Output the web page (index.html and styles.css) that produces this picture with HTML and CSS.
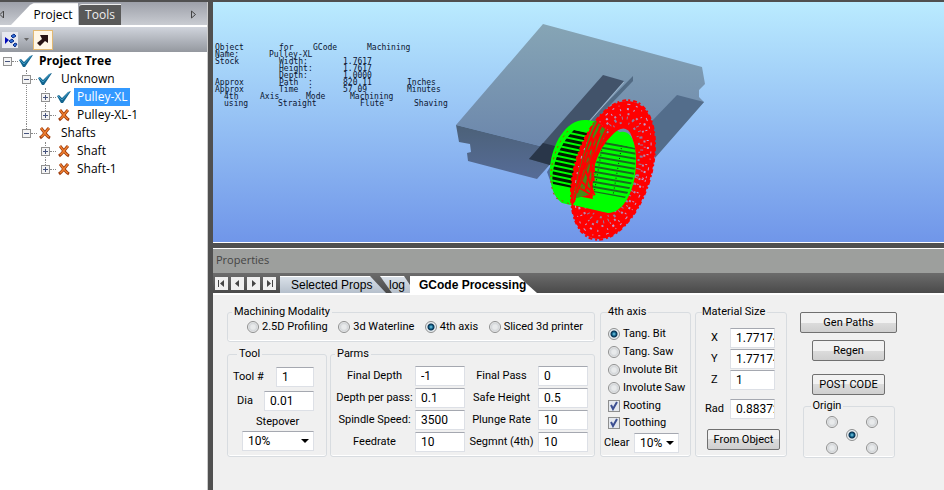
FILE: index.html
```
<!DOCTYPE html>
<html lang="en">
<head>
<meta charset="utf-8">
<title>GCode Processing</title>
<link rel="stylesheet" href="styles.css">
</head>
<body>

<svg class="defs" width="0" height="0" aria-hidden="true">
	<symbol id="check" viewBox="0 0 16 14"><path d="M1 6l2-1 3 3 6-6 3-1-8 12H5z" fill="#14658f"/><path d="M2 6l4 4 7-8" fill="none" stroke="#3e9cc6"/></symbol>
	<symbol id="cross" viewBox="0 0 16 14"><path d="M4 2c2 2 5 8 9 10M12 2c-3 3-5 7-9 10" fill="none" stroke="#9c3a0c" stroke-width="3"/><path d="M4 2c2 2 5 8 8 9M12 2c-3 3-5 7-8 9" fill="none" stroke="#f08030" stroke-width="1.500"/></symbol>
</svg>

<aside class="sidebar">
	<div class="sidetabs">
		<button class="scroll" aria-label="Previous tab"><svg width="6" height="9"><path d="M0 4.500L3.500 1v7z" fill="none" stroke="#444"/></svg></button>
		<button class="tab active">Project</button>
		<button class="tab">Tools</button>
		<button class="scroll next" aria-label="Next tab"><svg width="6" height="9"><path d="M.5 1v7l4-3.500z" fill="none" stroke="#444"/></svg></button>
	</div>
	<div class="toolbar">
		<button class="nodes" aria-label="Tree options"><svg width="16" height="16"><path d="M3 5l4 3-4 4z" fill="#0008b8"/><path d="M9 4l3-2 2 2-3 2zM7 9l3-2 2 2-3 2zM11 13l2-2 2 1-2 3z" fill="#2d6ed8" stroke="#102f88"/></svg></button>
		<svg class="drop" width="5" height="3"><path d="M0 0h5L2.500 3z" fill="#666"/></svg>
		<button class="pick" aria-label="Pick"><svg width="14" height="14"><path d="M4 2h8v8L9 8l-5 5-3-3 5-4z" fill="#291313"/></svg></button>
	</div>
	<ul class="tree">
		<li>
			<div class="node root"><i class="box"></i><svg><use href="#check"/></svg><b>Project Tree</b></div>
			<ul>
				<li>
					<div class="node branch"><i class="box"></i><svg><use href="#check"/></svg><span>Unknown</span></div>
					<ul>
						<li><div class="node"><i class="box plus"></i><svg><use href="#check"/></svg><span class="selected">Pulley-XL</span></div></li>
						<li><div class="node"><i class="box plus"></i><svg><use href="#cross"/></svg><span>Pulley-XL-1</span></div></li>
					</ul>
				</li>
				<li>
					<div class="node branch"><i class="box"></i><svg><use href="#cross"/></svg><span>Shafts</span></div>
					<ul>
						<li><div class="node"><i class="box plus"></i><svg><use href="#cross"/></svg><span>Shaft</span></div></li>
						<li><div class="node"><i class="box plus"></i><svg><use href="#cross"/></svg><span>Shaft-1</span></div></li>
					</ul>
				</li>
			</ul>
		</li>
	</ul>
</aside>

<main>
	<section class="viewport">
		<svg class="scene" viewBox="0 0 731 240" preserveAspectRatio="xMinYMin slice">
			<defs>
				<linearGradient id="top" x1="0" y1="0" x2="0" y2="1"><stop offset="0" stop-color="#86a5b5"/><stop offset="1" stop-color="#6680aa"/></linearGradient>
				<linearGradient id="front" x1="0" y1="0" x2="0" y2="1"><stop offset="0" stop-color="#4c6178"/><stop offset="1" stop-color="#566c98"/></linearGradient>
				<pattern id="teeth" width="30" height="5" patternUnits="userSpaceOnUse" patternTransform="rotate(12)"><path d="M0 0h30v3H0z" fill="#001c00"/></pattern>
				<pattern id="bores" width="40" height="5" patternUnits="userSpaceOnUse" patternTransform="rotate(10)"><path d="M0 0h40v2H0z" fill="#176b20"/><path d="M8 3h1v1H8zM27 3h1v1h-1z" fill="#030"/></pattern>
			</defs>
			<path d="M330 22L489 65l3 17-6 6v7l5 5-49 55-60 15-55-26-84-21z" fill="url(#top)"/>
			<path d="M243 123l84 21 22 5-25 28-69-18-1-8 4-1-1-8-11-2z" fill="url(#front)"/>
			<path d="M464 93l27 7-49 56-4-36z" fill="#536d8b"/>
			<path d="M390 73l21 6-74 84-21-6z" fill="#42536a"/>
			<path d="M316 157l14-16 20 5-13 17z" fill="#293649"/>
			<path d="M420 74v5l-41 43-5-1z" fill="#526b84"/>
			<path d="M411 80l-36 41" stroke="#9fb5ca" fill="none"/>
			<path d="M334 170l6-10 5 12-7 9z" fill="#526ba0"/>
			<!-- hub, back end -->
			<path d="M374 118c-20-2-35 23-37 47-1 20 5 31 12 36l46 11 14-80-15-11z" fill="#0f0"/>
			<path d="M361 128l31 7-13 55-39-8c-3-12 5-39 21-54z" fill="url(#teeth)"/>
			<path d="M355 129c-15 16-23 50-12 67l16 7" fill="none" stroke="#b34a00" stroke-width="1" stroke-dasharray="2 4"/>
			<!-- flange -->
			<g transform="translate(400 168) rotate(17)" fill="none" stroke="red">
				<ellipse rx="29" ry="62" stroke-width="18"/>
				<ellipse rx="24" ry="49" stroke-width="12"/>
				<ellipse rx="38" ry="72" stroke-width="2" stroke-dasharray="4 2 2 3"/>
				<g stroke="#c09fd0">
					<ellipse rx="34" ry="68" stroke-dasharray="2 5 1 8 3 6"/>
					<ellipse rx="31" ry="63" stroke-width="2" stroke-dasharray="1 6 2 5 1 9"/>
					<ellipse rx="28" ry="58" stroke="#b28fb5" stroke-width="2" stroke-dasharray="2 4 1 7 2 8"/>
					<ellipse rx="25" ry="54" stroke="#927ba0" stroke-width="3" stroke-dasharray="1 5 2 6 1 4"/>
					<ellipse rx="23" ry="49" stroke="#927ba0" stroke-width="2" stroke-dasharray="1 6 2 7"/>
				</g>
			</g>
			<!-- hub, front end -->
			<path d="M408 130c11-2 16 14 15 32-1 28-13 49-28 49l-35-8 4-9 16 3 1-30c4-18 15-36 27-37z" fill="#0f0"/>
			<path d="M392 139l30 7c2 19-2 36-10 50l-32-6 1-24z" fill="url(#bores)"/>
			<path d="M382 118c-9 22-18 54-22 79l19-5 3-37 12-26z" fill="#448c16"/>
			<path d="M386 118c-12 23-20 52-25 82M390 121c-13 22-22 49-26 70M395 124c-9 18-16 30-17 71M365 188l22-57M366 177l16 16M370 161l11 31M375 148l6 31M379 135l2 35M362 183l18 11M387 124l-15 66M369 168l23-28" fill="none" stroke="red" stroke-width="2"/>
			<path d="M362 192l18-42M368 187l15-16" fill="none" stroke="#a44505"/>
		</svg>
		<div class="hud">
			<p class="title"><span>Object</span> <span>for</span> <span>GCode</span> <span>Machining</span></p>
			<p class="name"><span>Name:</span> <span>Pulley-XL</span></p>
			<p><span>Stock</span> <span>Width:</span> <span>1.7617</span></p>
			<p><span></span> <span>Height:</span> <span>1.7617</span></p>
			<p><span></span> <span>Depth:</span> <span>1.0000</span></p>
			<p><span>Approx</span> <span>Path &nbsp;:</span> <span>820.11</span> <span>Inches</span></p>
			<p><span>Approx</span> <span>Time &nbsp;:</span> <span>57.09</span> <span>Minutes</span></p>
			<p class="mode"><span>4th</span> <span>Axis</span> <span>Mode</span> <span>Machining</span></p>
			<p class="method"><span>using</span> <span>Straight</span> <span>Flute</span> <span>Shaving</span></p>
		</div>
	</section>

	<section class="properties">
		<h2>Properties</h2>
		<div class="tabs">
			<button class="nav" aria-label="First"><svg width="9" height="9"><path d="M1 1h1v7H1zM7 1v7L3 4.500z"/></svg></button>
			<button class="nav" aria-label="Previous"><svg width="9" height="9"><path d="M6 1v7L2 4.500z"/></svg></button>
			<button class="nav" aria-label="Next"><svg width="9" height="9"><path d="M3 1v7l4-3.500z"/></svg></button>
			<button class="nav" aria-label="Last"><svg width="9" height="9"><path d="M2 1v7l4-3.500zM7 1h1v7H7z"/></svg></button>
			<button class="tab selprops">Selected Props</button>
			<button class="tab log">log</button>
			<button class="tab active">GCode Processing</button>
		</div>
		<form class="panel">
			<div class="left">
				<fieldset class="modality">
					<legend>Machining Modality</legend>
					<div class="choices">
						<label><input type="radio" name="modality">2.5D Profiling</label>
						<label><input type="radio" name="modality">3d Waterline</label>
						<label><input type="radio" name="modality" checked>4th axis</label>
						<label><input type="radio" name="modality">Sliced 3d printer</label>
					</div>
				</fieldset>
				<fieldset class="tool">
					<legend>Tool</legend>
					<div class="row"><label for="toolno">Tool #</label><input type="text" id="toolno" value="1"></div>
					<div class="row dia"><label for="dia">Dia</label><input type="text" id="dia" value="0.01"></div>
					<label for="stepover" class="stepover">Stepover</label>
					<select id="stepover"><option>10%</option></select>
				</fieldset>
				<fieldset class="parms">
					<legend>Parms</legend>
					<div class="grid">
						<label for="depth">Final Depth</label><input type="text" id="depth" value="-1">
						<label for="pass">Final Pass</label><input type="text" id="pass" value="0">
						<label for="perpass">Depth per pass:</label><input type="text" id="perpass" value="0.1">
						<label for="safe">Safe Height</label><input type="text" id="safe" value="0.5">
						<label for="speed">Spindle Speed:</label><input type="text" id="speed" value="3500">
						<label for="plunge">Plunge Rate</label><input type="text" id="plunge" value="10">
						<label for="feed">Feedrate</label><input type="text" id="feed" value="10">
						<label for="segmnt">Segmnt (4th)</label><input type="text" id="segmnt" value="10">
					</div>
				</fieldset>
			</div>
			<fieldset class="axis">
				<legend>4th axis</legend>
				<label><input type="radio" name="axis" checked>Tang. Bit</label>
				<label><input type="radio" name="axis">Tang. Saw</label>
				<label><input type="radio" name="axis">Involute Bit</label>
				<label><input type="radio" name="axis">Involute Saw</label>
				<label class="tick"><input type="checkbox" checked>Rooting</label>
				<label class="tick"><input type="checkbox" checked>Toothing</label>
				<div class="row"><label for="clear">Clear</label><select id="clear"><option>10%</option></select></div>
			</fieldset>
			<fieldset class="material">
				<legend>Material Size</legend>
				<div class="row"><label for="mx">X</label><input type="text" id="mx" value="1.77174"></div>
				<div class="row"><label for="my">Y</label><input type="text" id="my" value="1.77174"></div>
				<div class="row"><label for="mz">Z</label><input type="text" id="mz" value="1"></div>
				<div class="row rad"><label for="rad">Rad</label><input type="text" id="rad" value="0.88372"></div>
				<button type="button" class="btn">From Object</button>
			</fieldset>
			<div class="actions">
				<button type="button" class="btn wide">Gen Paths</button>
				<button type="button" class="btn">Regen</button>
				<button type="button" class="btn post">POST CODE</button>
				<fieldset class="origin">
					<legend>Origin</legend>
					<input type="radio" name="origin" aria-label="Top left">
					<input type="radio" name="origin" aria-label="Top right">
					<input type="radio" name="origin" aria-label="Center" class="center" checked>
					<input type="radio" name="origin" aria-label="Bottom left">
					<input type="radio" name="origin" aria-label="Bottom right">
				</fieldset>
			</div>
		</form>
	</section>
</main>

</body>
</html>
```
FILE: styles.css
```
* {box-sizing: border-box;}
body {
	display: flex;
	margin: 0;
	min-height: 100vh;
	padding-top: 2px;
	background: #505050;
	color: #000;
	font: 11px/14px Roboto, sans-serif;
	overflow: hidden;
}
button, input, select {
	font: inherit;
	color: inherit;
	margin: 0;
}
.defs {position: absolute;}

/* ---- left pane ---- */

.sidebar {
	flex: none;
	width: 208px;
	margin-right: 5px;
	background: #fff;
	font: 12px/18px "Open Sans", sans-serif;
	border-right: 1px solid #ccc;
}
.sidetabs {
	display: flex;
	align-items: flex-end;
	height: 23px;
	background: linear-gradient(#9da0a9, #c9ccd2);
}
.sidetabs button {
	border: 0;
	padding: 0;
	background: none;
}
.sidetabs .scroll {
	width: 11px;
	height: 20px;
	text-align: left;
}
.sidetabs .next {margin: 0 5px 0 auto;}
.sidetabs .tab {
	width: 42px;
	height: 21px;
	background: #595959;
	color: #eee;
	border-top: 1px solid #eee;
	border-radius: 3px 0 0 0;
}
.sidetabs .tab.active {
	width: 67px;
	height: 22px;
	padding-left: 17px;
	margin-right: 1px;
	background: #fff;
	color: #000;
	clip-path: polygon(0 100%, 19px 2px, 23px 0, 100% 0, 100% 100%);
}
.toolbar {
	display: flex;
	align-items: center;
	height: 27px;
	padding-left: 2px;
	border-top: 2px solid #fff;
	background: linear-gradient(#d0d4dc, #94989f);
}
.toolbar button {
	display: flex;
	width: 16px;
	height: 16px;
	padding: 0;
	border: 0;
	background: #e6e8ee;
}
.toolbar .drop {margin: 0 4px 0 6px;}
.toolbar .pick {
	width: 20px;
	height: 20px;
	padding: 2px;
	background: #fff6e6;
	border: 1px solid #e2b872;
}

.tree, .tree ul {
	list-style: none;
	margin: 0;
	padding: 0;
}
.tree {padding-left: 3px;}
.tree ul {padding-left: 19px;}
.tree li {position: relative;}
.tree li li::before {
	content: "";
	position: absolute;
	left: 4px; top: 0; bottom: 0;
	border-left: 1px dotted #888;
}
.tree li li:last-child::before {
	bottom: auto;
	height: 9px;
}
.node {
	display: flex;
	align-items: center;
	height: 18px;
}
.node svg {
	width: 16px;
	height: 14px;
	margin-right: 2px;
}
.node.branch svg {margin-right: 5px;}
.node::before {
	content: "";
	order: 1;
	width: 6px;
	border-top: 1px dotted #888;
}
.node svg, .node b, .node span {order: 2;}
.node b, .node span {padding: 0 3px;}
.box {
	position: relative;
	width: 9px;
	height: 9px;
	border: 1px solid #919191;
	background: linear-gradient(#46547e, #46547e) center / 5px 1px no-repeat #f4f4f4;
}
.box.plus {
	background:
		linear-gradient(#46547e, #46547e) center / 5px 1px no-repeat,
		linear-gradient(#46547e, #46547e) center / 1px 5px no-repeat #f4f4f4;
}
.node .selected {
	background: #3399ff;
	color: #fff;
}

/* ---- 3d view ---- */

main {
	flex: 1;
	min-width: 0;
	display: flex;
	flex-direction: column;
}
.viewport {
	position: relative;
	background: linear-gradient(#baebff, #7096e9);
	border-bottom: 1px solid #fff;
}
.scene {
	display: block;
	width: 100%;
	height: 240px;
}
.hud {
	position: absolute;
	left: 2px;
	top: 42px;
	font: 8px/7px "DejaVu Sans Mono", monospace;
	color: #0a1430;
}
.hud p {
	display: grid;
	grid-template-columns: repeat(4, 64px);
	height: 7px;
	margin: 0;
	white-space: pre;
}
.hud .title {grid-template-columns: 64px 34px 54px auto;}
.hud .name {grid-template-columns: 54px auto;}
.hud .mode {
	grid-template-columns: 36px 46px 44px auto;
	padding-left: 9px;
}
.hud .method {
	grid-template-columns: 54px 82px 54px auto;
	padding-left: 9px;
}

/* ---- properties ---- */

.properties {
	flex: 1;
	display: flex;
	flex-direction: column;
	margin-top: 5px;
	border-top: 1px solid #fff;
}
h2 {
	height: 24px;
	margin: 0;
	padding-left: 3px;
	background: #9d9f9d;
	color: #444;
	font: 11px/22px "Open Sans", sans-serif;
}
.tabs {
	display: flex;
	align-items: flex-end;
	height: 20px;
	padding-left: 2px;
	background: linear-gradient(#6c6c6c, #4a4a4a);
}
.nav {
	display: flex;
	width: 13px;
	height: 13px;
	margin: 0 3px 3px 0;
	padding: 2px;
	border: 0;
	background: #f0f0f0;
	fill: #444;
}
.tabs .tab {
	height: 17px;
	padding: 0 0 0 11px;
	border: 0;
	border-top: 1px solid #fff;
	background: linear-gradient(#d9e0e8, #b6c0cc);
	font: 12px/16px "Liberation Sans", sans-serif;
	text-align: left;
	white-space: nowrap;
}
.tabs .selprops {
	width: 106px;
	margin-left: 1px;
	clip-path: polygon(0 0, 90px 0, 100% 100%, 0 100%);
}
.tabs .log {
	width: 30px;
	margin-left: -6px;
	padding-left: 9px;
	clip-path: polygon(0 0, 24px 0, 100% 9px, 100% 100%, 12px 100%);
}
.tabs .tab.active {
	width: 127px;
	padding-left: 9px;
	background: #fff;
	font-weight: bold;
	clip-path: polygon(0 0, 108px 0, 100% 100%, 0 100%);
}

.panel {
	flex: 1;
	display: flex;
	align-items: flex-start;
	padding: 10px 0 0 14px;
	background: #f0f0f0;
	border-top: 2px solid #fff;
}
fieldset {
	min-width: 0;
	margin: 0;
	padding: 0;
	border: 1px solid #d8dce0;
	border-radius: 3px;
	box-shadow: inset 0 -1px #fff;
}
legend {
	margin-left: 4px;
	padding: 0 2px;
	white-space: nowrap;
}
.panel label {white-space: nowrap;}
.row {
	display: flex;
	align-items: center;
	justify-content: space-between;
}

input[type=text], select {
	min-width: 0;
	height: 20px;
	padding: 0 5px;
	border: 1px solid #dde0e6;
	border-top-color: #a5a8b0;
	background: #fff;
	font-size: 12px;
}
select {
	appearance: none;
	background:
		url("data:image/svg+xml,%3Csvg xmlns='http://www.w3.org/2000/svg' width='8' height='4'%3E%3Cpath d='M0 0h8L4 4z'/%3E%3C/svg%3E") right 4px center no-repeat,
		#fff;
}
input[type=radio], input[type=checkbox] {
	appearance: none;
	flex: none;
	width: 12px;
	height: 12px;
	border: 1px solid #8e8f8f;
	border-radius: 50%;
	background: radial-gradient(#e8eaeb 2px, #d2d5d8 4px, #f4f4f4 5px);
}
input[type=radio]:checked {
	background: radial-gradient(circle at 5px 5px, #7fd4ee, #0d5c84 2px, #0b2f4c 3px, #e8eef2 4px);
}
input[type=checkbox] {
	border-radius: 0;
	background:
		url("data:image/svg+xml,%3Csvg xmlns='http://www.w3.org/2000/svg' width='10' height='10'%3E%3Cpath d='M2 4l2 4 4-7' fill='none' stroke='%233c4f92' stroke-width='2'/%3E%3C/svg%3E") center no-repeat,
		#e4e8ee;
}

.left {
	display: grid;
	grid-template-columns: 100px 265px;
	gap: 5px 3px;
	width: 368px;
	margin-right: 5px;
}
.modality {
	grid-column: 1 / 3;
	height: 37px;
}
.choices {
	display: flex;
	justify-content: space-between;
	padding: 1px 11px 0 19px;
}
.choices label {
	display: flex;
	align-items: center;
	gap: 3px;
}
.tool, .parms {height: 110px;}
.tool {padding: 6px 12px 0 5px;}
.tool .row {margin-bottom: 4px;}
.tool .dia {padding-left: 4px;}
#toolno {width: 38px;}
#dia {width: 50px;}
.stepover {
	display: block;
	margin: 2px 0;
	padding-left: 23px;
}
#stepover {
	width: 72px;
	margin-left: 9px;
}
.parms .grid {
	display: grid;
	grid-template-columns: 81px 50px 73px 50px;
	row-gap: 2px;
	align-items: center;
	padding: 5px 0 0 3px;
	text-align: center;
}

.axis {
	width: 91px;
	height: 152px;
	margin-right: 4px;
	padding: 6px 0 0 7px;
}
.axis legend, .material legend {
	margin-left: 0;
	padding: 0 2px 0 0;
}
.axis > label {
	display: flex;
	align-items: center;
	gap: 3px;
	height: 18px;
}
.axis > .tick {height: 17px;}
.axis .row {
	margin-top: 2px;
	padding-right: 11px;
}
.axis .row label {margin-left: -4px;}
#clear {width: 45px;}

.material {
	width: 92px;
	height: 152px;
	margin-right: 13px;
	padding: 9px 11px 0 6px;
}
.material .row {
	margin-bottom: 1px;
	padding-left: 9px;
}
.material .row input {
	width: 45px;
	padding-right: 0;
}
.material .rad {
	margin: 9px 0 10px;
	padding-left: 3px;
}

.btn {
	width: 73px;
	height: 21px;
	padding: 0;
	border: 1px solid #707070;
	border-radius: 2px;
	background: linear-gradient(#f2f2f2 50%, #dcdcdc 50%, #cfcfcf);
	white-space: nowrap;
}
.material .btn {margin-left: 5px;}
.actions {
	display: flex;
	flex-direction: column;
	align-items: center;
	gap: 7px;
	padding-top: 7px;
}
.wide {width: 97px;}
.post {margin-top: 6px;}
.origin {
	display: grid;
	grid-template-columns: 12px 12px 12px;
	justify-content: center;
	gap: 1px 8px;
	width: 92px;
	height: 59px;
	margin-top: -3px;
	padding: 3px 0 0 7px;
}
.origin legend {margin-left: 0;}
.origin input:nth-of-type(2n) {grid-column: 3;}
.origin .center {grid-column: 2;}
.origin input:nth-of-type(4) {grid-column: 1;}
.origin input:nth-of-type(5) {grid-column: 3;}
```
